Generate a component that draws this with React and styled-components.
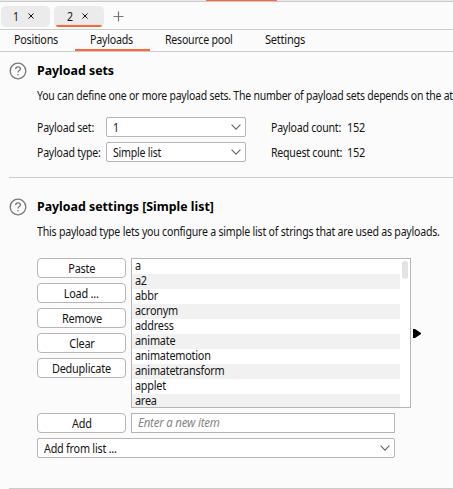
import React from 'react';
import styled, { createGlobalStyle } from 'styled-components';

const Global = createGlobalStyle`
  * { box-sizing: border-box; }
  html, body { margin: 0; background: #fbfbfb; overflow: hidden; }
  body, button {
    font-family: "Noto Sans", "Open Sans", sans-serif;
    font-size: 12px;
    line-height: 15px;
    color: #161616;
  }
`;

const Page = styled.main`
  width: 453px;
  height: 489px;
  display: flex;
  flex-direction: column;
  overflow: hidden;
  background: #fbfbfb;
`;

/* Narrow interface lettering: glyphs are slightly compressed and tightly set. */
const Label = styled.span`
  display: inline-block;
  white-space: nowrap;
  letter-spacing: -0.25px;
  transform: scaleX(${(p) => p.$fit || 0.88});
  transform-origin: ${(p) => (p.$centered ? 'center' : 'left')};
`;

const TopStrip = styled.div`
  flex: none;
  height: 2px;
  padding-left: 206px;
  background: #e9e9e9;
  border-bottom: 1px solid #cbcbcb;
`;

const TopAccent = styled.div`
  width: 71px;
  height: 1px;
  background: #ff6633;
`;

const AttackTabs = styled.div`
  flex: none;
  height: 28px;
  display: flex;
  padding: 4px 0 0 1px;
  border-bottom: 1px solid #cbcbcb;
`;

const AttackTab = styled.div`
  width: ${(p) => p.$width}px;
  height: 21px;
  margin-right: 4px;
  padding: 0 0 1px ${(p) => p.$inset}px;
  display: flex;
  align-items: center;
  gap: 8px;
  border-radius: 5px;
  background: #ebebeb;
  position: relative;
`;

const TabUnderline = styled.span`
  position: absolute;
  left: 2px;
  right: 2px;
  bottom: 0;
  height: 2px;
  border-radius: 0 0 2px 2px;
  background: #ff6633;
`;

const AddTab = styled.div`
  display: flex;
  padding: 5px 0 0 5px;
`;

const SubTabs = styled.nav`
  flex: none;
  height: 22px;
  display: flex;
  border-bottom: 1px solid #cbcbcb;
`;

const SubTab = styled.div`
  width: ${(p) => p.$width}px;
  height: 21px;
  padding: 2px 0 0 ${(p) => p.$inset}px;
  border-bottom: 2px solid ${(p) => (p.$active ? '#ff6633' : 'transparent')};
`;

const Section = styled.section`
  flex: none;
  height: ${(p) => p.$height}px;
  margin-left: 9px;
  display: flex;
  gap: 10px;
  padding-top: ${(p) => p.$top}px;
  border-bottom: 1px solid #cbcbcb;
`;

const HelpIcon = styled.svg`
  flex: none;
  width: 18px;
  height: 18px;
`;

const SectionBody = styled.div`
  flex: 1;
  min-width: 0;
`;

const Heading = styled.h2`
  margin: 0;
  width: max-content;
  height: 18px;
  font-size: 13px;
  line-height: 17px;
  font-weight: 700;
  color: #000;
  white-space: nowrap;
  transform: scaleX(0.95);
  transform-origin: left;
`;

const Description = styled.p`
  margin: 8px 0 0;
  height: 15px;
`;

const PayloadForm = styled.div`
  margin-top: 14px;
  display: grid;
  grid-template-columns: 69px 140px 25px 76px auto;
  grid-auto-rows: 20px;
  row-gap: 5px;
  align-items: center;
`;

const CountCell = styled.div`
  grid-column: 4;
`;

const Select = styled.div`
  width: ${(p) => p.$width}px;
  height: 20px;
  display: flex;
  align-items: center;
  justify-content: space-between;
  padding: 0 4px 0 6px;
  border: 1px solid #b9b4b6;
  border-radius: 2px;
  background: #fff;
`;

const Editor = styled.div`
  margin-top: 19px;
  display: grid;
  grid-template-columns: 89px 280px 10px;
  column-gap: 5px;
  row-gap: 5px;
`;

const ButtonStack = styled.div`
  display: flex;
  flex-direction: column;
  gap: 5px;
`;

const Button = styled.button`
  width: 89px;
  height: 20px;
  padding: 0;
  border: 1px solid #b9b4b6;
  border-radius: 4px;
  background: #fff;
`;

const ListBox = styled.div`
  height: 150px;
  display: flex;
  border: 1px solid #b5b5b5;
  background: #fff;
  overflow: hidden;
`;

const Items = styled.ul`
  width: 268px;
  margin: 0;
  padding: 0;
  list-style: none;
`;

const Item = styled.li`
  height: 15px;
  padding-left: 3px;
  line-height: 13px;
  &:nth-child(even) { background: #f1f1f1; }
`;

const ScrollThumb = styled.div`
  width: 6px;
  height: 18px;
  margin: 2px 0 0 2px;
  border-radius: 3px;
  background: #e3e3e3;
`;

const SplitArrow = styled.svg`
  width: 8px;
  height: 9px;
  margin: 71px 0 0 -3px;
`;

const NewItem = styled.div`
  width: 264px;
  height: 20px;
  padding: 1px 6px;
  border: 1px solid #b5b5b5;
  background: #fff;
  color: #858585;
  font-style: italic;
`;

const ListSelectRow = styled.div`
  grid-column: 1 / -1;
`;

const Help = () => (
  <HelpIcon viewBox="0 0 18 18" fill="none" stroke="#777" strokeWidth="1.3">
    <circle cx="9" cy="9" r="7.8" />
    <path d="M6.6 7.1C6.6 5.6 7.6 4.8 9 4.8s2.4.8 2.4 2.1c0 1.6-2.4 1.8-2.4 3.6" />
    <path d="M9 11.9v1.4" />
  </HelpIcon>
);

const Close = () => (
  <svg width="6" height="6" viewBox="0 0 6 6" stroke="#111" strokeWidth="1">
    <path d="M.5.5l5 5M5.5.5l-5 5" />
  </svg>
);

const Chevron = () => (
  <svg width="10" height="6" viewBox="0 0 10 6" fill="none" stroke="#666" strokeWidth="1.1">
    <path d="M.6.7L5 5.1 9.4.7" />
  </svg>
);

const actions = ['Paste', 'Load ...', 'Remove', 'Clear', 'Deduplicate'];
const items = ['a', 'a2', 'abbr', 'acronym', 'address', 'animate', 'animatemotion', 'animatetransform', 'applet', 'area'];

export default function App() {
  return (
    <Page>
      <Global />
      <TopStrip><TopAccent /></TopStrip>
      <AttackTabs>
        <AttackTab $width={49} $inset={12}><Label>1</Label><Close /></AttackTab>
        <AttackTab $width={50} $inset={13}><Label>2</Label><Close /><TabUnderline /></AttackTab>
        <AddTab>
          <svg width="11" height="11" viewBox="0 0 11 11" stroke="#777" strokeWidth="1.2">
            <path d="M5.5.5v10M.5 5.5h10" />
          </svg>
        </AddTab>
      </AttackTabs>
      <SubTabs>
        <SubTab $width={75} $inset={14}><Label $fit={0.9}>Positions</Label></SubTab>
        <SubTab $width={75} $inset={15} $active><Label $fit={0.89}>Payloads</Label></SubTab>
        <SubTab $width={100} $inset={15}><Label>Resource pool</Label></SubTab>
        <SubTab $width={75} $inset={15}><Label $fit={0.92}>Settings</Label></SubTab>
      </SubTabs>
      <Section $height={126} $top={10}>
        <Help />
        <SectionBody>
          <Heading>Payload sets</Heading>
          <Description>
            <Label $fit={0.872}>You can define one or more payload sets. The number of payload sets depends on the attack</Label>
          </Description>
          <PayloadForm>
            <div><Label>Payload set:</Label></div>
            <Select $width={140}><Label>1</Label><Chevron /></Select>
            <CountCell><Label>Payload count:</Label></CountCell>
            <div><Label $fit={0.91}>152</Label></div>
            <div><Label>Payload type:</Label></div>
            <Select $width={140}><Label>Simple list</Label><Chevron /></Select>
            <CountCell><Label>Request count:</Label></CountCell>
            <div><Label $fit={0.91}>152</Label></div>
          </PayloadForm>
        </SectionBody>
      </Section>
      <Section $height={311} $top={20}>
        <Help />
        <SectionBody>
          <Heading>Payload settings [Simple list]</Heading>
          <Description>
            <Label $fit={0.882}>This payload type lets you configure a simple list of strings that are used as payloads.</Label>
          </Description>
          <Editor>
            <ButtonStack>
              {actions.map((a) => <Button key={a}><Label $centered $fit={0.91}>{a}</Label></Button>)}
            </ButtonStack>
            <ListBox>
              <Items>{items.map((i) => <Item key={i}><Label $fit={0.905}>{i}</Label></Item>)}</Items>
              <ScrollThumb />
            </ListBox>
            <SplitArrow viewBox="0 0 8 9"><path d="M0 0h2l6 4v1L2 9H0z" /></SplitArrow>
            <Button><Label $centered $fit={0.91}>Add</Label></Button>
            <NewItem><Label $fit={0.96}>Enter a new item</Label></NewItem>
            <ListSelectRow>
              <Select $width={358}><Label $fit={0.9}>Add from list ...</Label><Chevron /></Select>
            </ListSelectRow>
          </Editor>
        </SectionBody>
      </Section>
    </Page>
  );
}
